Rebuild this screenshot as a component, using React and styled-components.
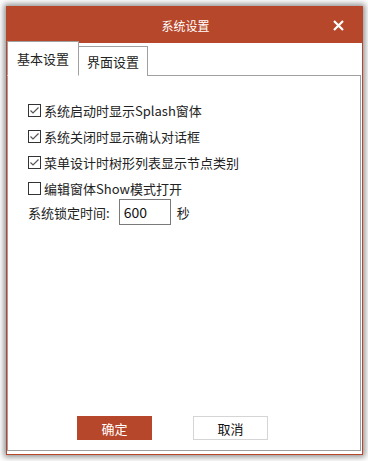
import React, { useState } from "react";
import styled, { createGlobalStyle } from "styled-components";

const GlobalStyle = createGlobalStyle`
  html, body {
    margin: 0;
    padding: 0;
    background: #ffffff;
  }
  body {
    font-family: "Noto Sans CJK SC", "Noto Sans", sans-serif;
    font-size: 13px;
    color: #222;
  }
`;

const accent = "#b7472a";

const Window = styled.div`
  margin: 6px;
  width: 355px;
  height: 447px;
  border: 1px solid ${accent};
  background: #fff;
  box-shadow: 0 0 6px 2px rgba(0, 0, 0, 0.45);
  display: flex;
  flex-direction: column;
`;

const TitleBar = styled.div`
  height: 36px;
  background: ${accent};
  color: #fff;
  display: grid;
  grid-template-columns: 1fr auto 1fr;
  align-items: center;
  font-size: 12px;
`;

const Title = styled.div`
  grid-column: 2;
  padding-left: 2px;
`;

const CloseButton = styled.button`
  grid-column: 3;
  justify-self: end;
  margin-right: 17px;
  width: 14px;
  height: 14px;
  padding: 0;
  border: none;
  background: transparent;
  cursor: pointer;
  display: flex;
  align-items: center;
  justify-content: center;
`;

const TabControl = styled.div`
  flex: 1;
  display: flex;
  flex-direction: column;
  margin: 0 1px 3px 0;
`;

const TabStrip = styled.div`
  display: flex;
  align-items: flex-end;
  height: 33px;
  margin-bottom: -1px;
  position: relative;
  z-index: 1;
`;

const Tab = styled.div`
  height: ${(p) => (p.$active ? 32 : 29)}px;
  padding: 0 ${(p) => (p.$active ? 9 : 8)}px;
  border: 1px solid #a0a0a0;
  border-left: ${(p) => (p.$active ? "1px solid #a0a0a0" : "none")};
  border-bottom: ${(p) => (p.$active ? "1px solid #fff" : "none")};
  background: #fff;
  display: flex;
  align-items: center;
  font-size: 13px;
  color: #222;
  padding-bottom: ${(p) => (p.$active ? 1 : 0)}px;
  cursor: pointer;
`;

const Panel = styled.div`
  flex: 1;
  border: 1px solid #a0a0a0;
  display: flex;
  flex-direction: column;
  padding: 21px 0 10px 20px;
`;

const Options = styled.div`
  flex: 1;
  display: flex;
  flex-direction: column;
`;

const CheckRow = styled.label`
  height: 26px;
  display: flex;
  align-items: center;
  gap: 3px;
  cursor: pointer;
`;

const LockRow = styled.div`
  height: 26px;
  margin-top: -2px;
  display: flex;
  align-items: center;
`;

const LockLabel = styled.span`
  margin-right: 9px;
`;

const NumberInput = styled.input`
  width: 52px;
  height: 26px;
  box-sizing: border-box;
  border: 1px solid #7a7a7a;
  padding: 0 4px;
  font-family: "Noto Sans CJK SC", "Noto Sans", sans-serif;
  font-size: 14px;
  color: #111;
  outline: none;
  margin-right: 6px;
`;

const Footer = styled.div`
  display: flex;
  gap: 41px;
  padding-left: 49px;
`;

const Button = styled.button`
  width: 75px;
  height: 24px;
  box-sizing: border-box;
  font-family: "Noto Sans CJK SC", "Noto Sans", sans-serif;
  font-size: 13px;
  cursor: pointer;
  border: 1px solid ${(p) => (p.$primary ? accent : "#d5d5d5")};
  background: ${(p) => (p.$primary ? accent : "#fff")};
  color: ${(p) => (p.$primary ? "#fff" : "#111")};
  padding: 0;
`;

const CheckBox = ({ checked }) => (
  <svg width="13" height="13" viewBox="0 0 13 13">
    <rect x="0.5" y="0.5" width="12" height="12" fill="#fff" stroke="#333" />
    {checked && (
      <polyline
        points="2.5,6.5 5,9 10.5,3.5"
        fill="none"
        stroke="#555"
        strokeWidth="1.2"
      />
    )}
  </svg>
);

const options = [
  { label: "系统启动时显示Splash窗体", checked: true },
  { label: "系统关闭时显示确认对话框", checked: true },
  { label: "菜单设计时树形列表显示节点类别", checked: true },
  { label: "编辑窗体Show模式打开", checked: false },
];

export default function App() {
  const [tab, setTab] = useState(0);
  const [lock, setLock] = useState("600");

  return (
    <>
      <GlobalStyle />
      <Window>
        <TitleBar>
          <Title>系统设置</Title>
          <CloseButton aria-label="关闭">
            <svg width="11" height="11" viewBox="0 0 11 11">
              <path
                d="M1 1 L10 10 M10 1 L1 10"
                stroke="#fff"
                strokeWidth="2.2"
              />
            </svg>
          </CloseButton>
        </TitleBar>
        <TabControl>
          <TabStrip>
            <Tab $active={tab === 0} onClick={() => setTab(0)}>
              基本设置
            </Tab>
            <Tab $active={tab === 1} onClick={() => setTab(1)}>
              界面设置
            </Tab>
          </TabStrip>
          <Panel>
            <Options>
              {options.map((o) => (
                <CheckRow key={o.label}>
                  <CheckBox checked={o.checked} />
                  <span>{o.label}</span>
                </CheckRow>
              ))}
              <LockRow>
                <LockLabel>系统锁定时间:</LockLabel>
                <NumberInput
                  value={lock}
                  onChange={(e) => setLock(e.target.value)}
                />
                <span>秒</span>
              </LockRow>
            </Options>
            <Footer>
              <Button $primary>确定</Button>
              <Button>取消</Button>
            </Footer>
          </Panel>
        </TabControl>
      </Window>
    </>
  );
}
